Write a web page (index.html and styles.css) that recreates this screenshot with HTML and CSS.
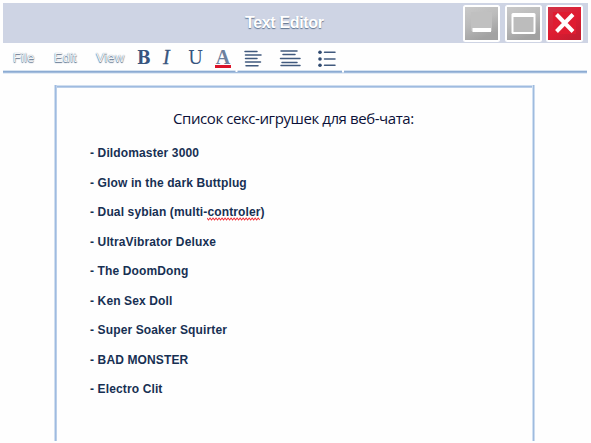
FILE: index.html
```html
<!DOCTYPE html>
<html lang="ru">
<head>
<meta charset="utf-8">
<title>Text Editor</title>
<link rel="stylesheet" href="styles.css">
</head>
<body>
<div class="window">
  <header class="titlebar">
    <h1 class="title">Text Editor</h1>
    <div class="controls">
      <svg class="control" viewBox="0 0 37 37"><rect width="37" height="37" rx="2.5" fill="#fff"/><rect x="2" y="2" width="33" height="33" fill="url(#gray)"/><rect x="8" y="7" width="21" height="19" fill="#c0c0c0"/><rect x="9.500" y="23" width="18.500" height="4" fill="#fff"/></svg>
      <svg class="control" viewBox="0 0 37 37"><rect width="37" height="37" rx="2.500" fill="#fff"/><rect x="2" y="2" width="33" height="33" fill="url(#gray)"/><rect x="6.500" y="8" width="24" height="21" rx="1.500" fill="#fff"/><rect x="8.500" y="12" width="20" height="15" fill="#bcbcbc"/></svg>
      <svg class="control" viewBox="0 0 37 37"><rect width="37" height="37" rx="2.500" fill="#fff"/><rect x="2" y="2" width="33" height="33" fill="url(#red)"/><rect x="7" y="7" width="23" height="22" fill="#df1c31"/><path d="M10.500 9.500 27 26.500M27 9.500 10.500 26.500" stroke="#fff" stroke-width="4"/></svg>
    </div>
  </header>
  <nav class="toolbar">
    <span class="menu">File</span>
    <span class="menu">Edit</span>
    <span class="menu">View</span>
    <span class="tool bold">B</span>
    <span class="tool italic">I</span>
    <span class="tool underline">U</span>
    <span class="tool color">A</span>
    <svg class="aligns" viewBox="0 0 96 20"><g fill="none" stroke="#40597d" stroke-width="1.500" stroke-linecap="round"><path d="M1 3.500H13M1.500 7H17M1.500 10.500H13M1.500 14H16.500M2 17.800H14M37 3H53M39 6.500H51M36.500 10.500H56M38 14.500H53M37 17.500H56M80.500 4.200H91M80.500 11H91M80.500 17.300H91"/></g><g fill="#304a70"><circle cx="76" cy="4.200" r="1.800"/><circle cx="76" cy="11" r="1.800"/><circle cx="76" cy="17.300" r="1.800"/></g></svg>
  </nav>
  <svg class="rule" viewBox="0 0 584 4"><rect y=".3" width="584" height="3.200" fill="#c5d7ec"/><rect y="1" width="584" height="1.600" fill="#8cabd2"/><path d="M233.500 0v2M340 0v2.500" stroke="#fff" stroke-width="2"/></svg>
  <main class="page">
    <h2 class="heading">Список секс-игрушек для веб-чата:</h2>
    <ul class="list">
      <li>- Dildomaster 3000</li>
      <li>- Glow in the dark Buttplug</li>
      <li>- Dual sybian (multi-<span class="misspelled">controler<svg class="squiggle" viewBox="0 0 53 4" preserveAspectRatio="none"><path d="M0 1l1.500 2L3 1l1.500 2L6 1l1.500 2L9 1l1.500 2L12 1l1.500 2L15 1l1.500 2L18 1l1.500 2L21 1l1.500 2L24 1l1.500 2L27 1l1.500 2L30 1l1.500 2L33 1l1.500 2L36 1l1.500 2L39 1l1.500 2L42 1l1.500 2L45 1l1.500 2L48 1l1.500 2L51 1l1.500 2" fill="none" stroke="#f32d35"/></svg></span>)</li>
      <li>- UltraVibrator Deluxe</li>
      <li>- The DoomDong</li>
      <li>- Ken Sex Doll</li>
      <li>- Super Soaker Squirter</li>
      <li>- BAD MONSTER</li>
      <li>- Electro Clit</li>
    </ul>
  </main>
</div>
<svg class="defs" width="0" height="0"><defs>
  <linearGradient id="gray" x2=".4" y2="1"><stop stop-color="#c9c9c9"/><stop offset=".5" stop-color="#bbb"/><stop offset="1" stop-color="#a2a2a2"/></linearGradient>
  <linearGradient id="red" x2=".7" y2="1"><stop stop-color="#cf3448"/><stop offset=".6" stop-color="#de1c32"/><stop offset="1" stop-color="#c51d31"/></linearGradient>
</defs></svg>
</body>
</html>
```
FILE: styles.css
```css
* { box-sizing: border-box; }
html, body { height: 100%; }
body {
  margin: 0;
  overflow: hidden;
  background: #fefefe;
  font-family: "Liberation Sans", Arial, sans-serif;
}
.window { height: 443px; padding: 3px 3px 0; }
.titlebar {
  display: flex;
  height: 40px;
  background: #ced4e4;
}
.title {
  width: 460px;
  margin: 0;
  padding-left: 242px;
  font-size: 16px;
  line-height: 39px;
  letter-spacing: -0.35px;
  color: #fff;
  text-shadow: 0 1px 1px #60748f;
  white-space: nowrap;
}
.controls { display: flex; gap: 4.5px; padding-top: 2px; }
.control { display: block; width: 37px; height: 37px; }
.toolbar {
  display: grid;
  grid-template-columns: 41px 42px 41px 26px 25px 27px 29px auto;
  height: 27px;
  padding-left: 10px;
  white-space: nowrap;
}
.menu {
  font-size: 13px;
  line-height: 29px;
  letter-spacing: 0.15px;
  color: #f4f6f9;
  text-shadow: 0 1px 1px #5e748f, 0 0 1px #6d809b;
}
.tool {
  font-family: "DejaVu Serif", serif;
  font-size: 18px;
  line-height: 29px;
  color: #38557e;
}
.bold {
  font-family: "DejaVu Serif Condensed", "DejaVu Serif", serif;
  font-stretch: condensed;
  font-weight: bold;
}
.italic { font-family: "Liberation Serif", serif; font-size: 20px; font-style: italic; -webkit-text-stroke: 0.3px #38557e; }
.color {
  width: 16px;
  height: 25px;
  border-bottom: 3px solid #dc1429;
  text-align: center;
  font-family: "Liberation Serif", serif;
  font-size: 20px;
  font-weight: bold;
  color: #6d819e;
}
.aligns { display: block; width: 96px; height: 20px; margin-top: 5px; }
.rule { display: block; width: 584px; height: 4px; }
.page {
  width: 481px;
  height: 356px;
  margin: 11px 0 0 51px;
  padding: 21px 3px 0;
  background:
    linear-gradient(90deg, #d0deef 1px, #9fbbe0 1px 2px, #bbcfe9 2px) 0 0 / 3px 100% no-repeat,
    linear-gradient(90deg, #d0e0f2 1px, #9fbbde 1px 2px, #ccdcef 2px) 100% 0 / 3px 100% no-repeat,
    linear-gradient(#d0deef 1px, #9fbbe0 1px 2px, #bbcfe9 2px) 0 0 / 100% 3px no-repeat;
}
.heading {
  margin: 0;
  padding-left: 116px;
  font: 400 15px/24px "Open Sans", "Noto Sans", sans-serif;
  letter-spacing: -0.42px;
  color: #0b1038;
  white-space: nowrap;
}
.list { margin: 9px 0 0 33px; padding: 0; list-style: none; }
.list li {
  height: 29.5px;
  font-size: 12px;
  font-weight: bold;
  line-height: 29.5px;
  letter-spacing: 0.13px;
  color: #173053;
  white-space: nowrap;
}
.misspelled { position: relative; }
.squiggle { position: absolute; left: 0; top: 12px; width: 100%; height: 4px; }
.defs { position: absolute; }
```
